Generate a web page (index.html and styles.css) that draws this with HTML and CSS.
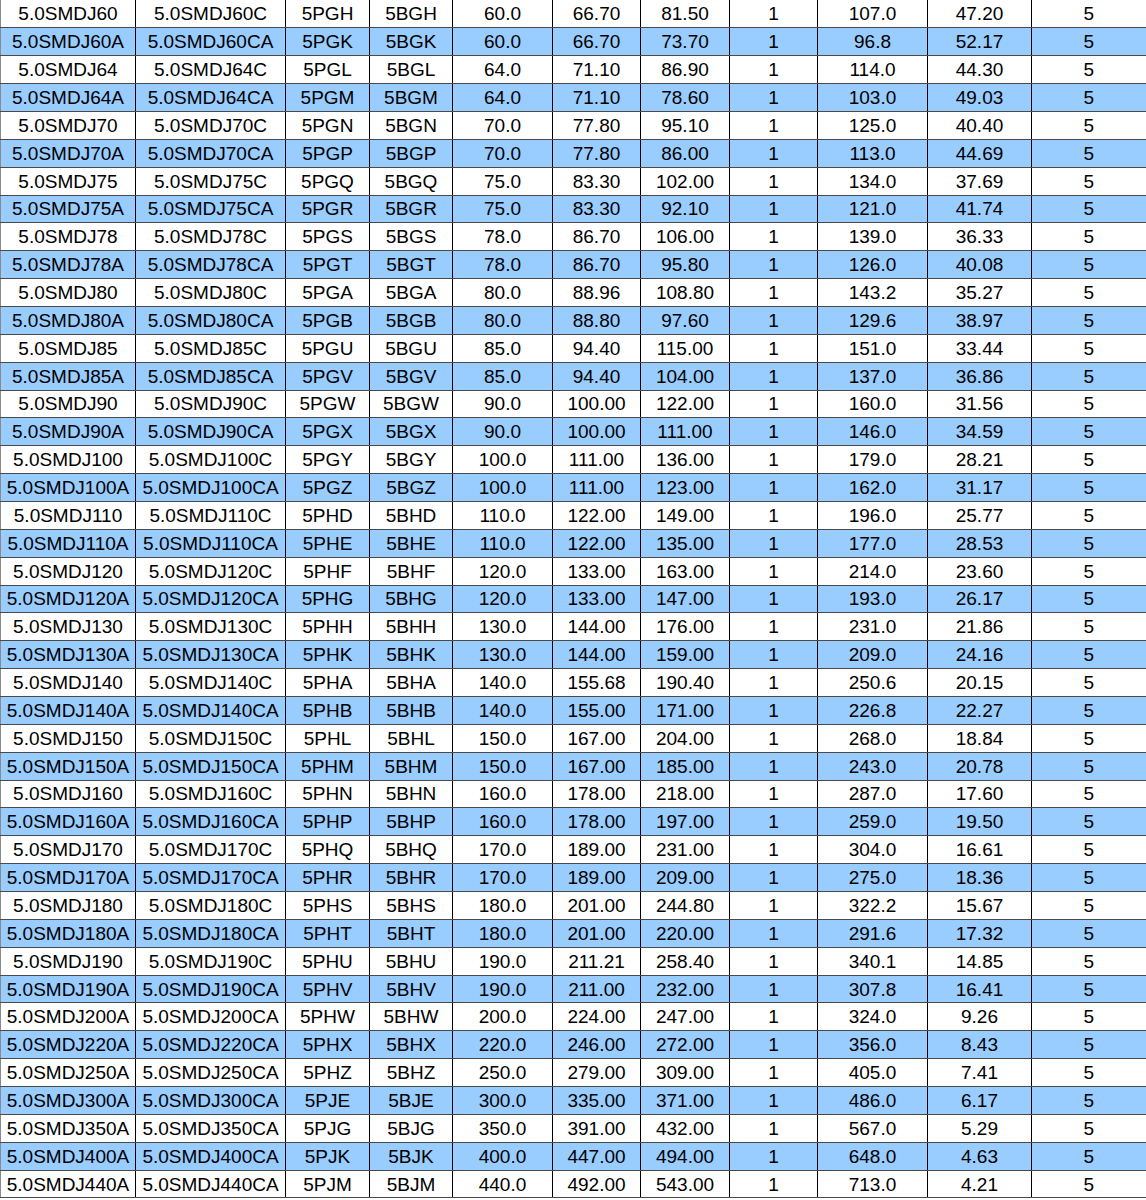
FILE: index.html
```html
<!DOCTYPE html>
<html>
<head>
<meta charset="utf-8">
<link rel="stylesheet" href="styles.css">
</head>
<body>
<table class="spec">
<colgroup>
<col class="c1"><col class="c2"><col class="c3"><col class="c4"><col class="c5"><col class="c6"><col class="c7"><col class="c8"><col class="c9"><col class="c10"><col class="c11">
</colgroup>
<tbody>
<tr><td>5.0SMDJ60</td><td>5.0SMDJ60C</td><td>5PGH</td><td>5BGH</td><td>60.0</td><td>66.70</td><td>81.50</td><td>1</td><td>107.0</td><td>47.20</td><td>5</td></tr>
<tr class="alt"><td>5.0SMDJ60A</td><td>5.0SMDJ60CA</td><td>5PGK</td><td>5BGK</td><td>60.0</td><td>66.70</td><td>73.70</td><td>1</td><td>96.8</td><td>52.17</td><td>5</td></tr>
<tr><td>5.0SMDJ64</td><td>5.0SMDJ64C</td><td>5PGL</td><td>5BGL</td><td>64.0</td><td>71.10</td><td>86.90</td><td>1</td><td>114.0</td><td>44.30</td><td>5</td></tr>
<tr class="alt"><td>5.0SMDJ64A</td><td>5.0SMDJ64CA</td><td>5PGM</td><td>5BGM</td><td>64.0</td><td>71.10</td><td>78.60</td><td>1</td><td>103.0</td><td>49.03</td><td>5</td></tr>
<tr><td>5.0SMDJ70</td><td>5.0SMDJ70C</td><td>5PGN</td><td>5BGN</td><td>70.0</td><td>77.80</td><td>95.10</td><td>1</td><td>125.0</td><td>40.40</td><td>5</td></tr>
<tr class="alt"><td>5.0SMDJ70A</td><td>5.0SMDJ70CA</td><td>5PGP</td><td>5BGP</td><td>70.0</td><td>77.80</td><td>86.00</td><td>1</td><td>113.0</td><td>44.69</td><td>5</td></tr>
<tr><td>5.0SMDJ75</td><td>5.0SMDJ75C</td><td>5PGQ</td><td>5BGQ</td><td>75.0</td><td>83.30</td><td>102.00</td><td>1</td><td>134.0</td><td>37.69</td><td>5</td></tr>
<tr class="alt"><td>5.0SMDJ75A</td><td>5.0SMDJ75CA</td><td>5PGR</td><td>5BGR</td><td>75.0</td><td>83.30</td><td>92.10</td><td>1</td><td>121.0</td><td>41.74</td><td>5</td></tr>
<tr><td>5.0SMDJ78</td><td>5.0SMDJ78C</td><td>5PGS</td><td>5BGS</td><td>78.0</td><td>86.70</td><td>106.00</td><td>1</td><td>139.0</td><td>36.33</td><td>5</td></tr>
<tr class="alt"><td>5.0SMDJ78A</td><td>5.0SMDJ78CA</td><td>5PGT</td><td>5BGT</td><td>78.0</td><td>86.70</td><td>95.80</td><td>1</td><td>126.0</td><td>40.08</td><td>5</td></tr>
<tr><td>5.0SMDJ80</td><td>5.0SMDJ80C</td><td>5PGA</td><td>5BGA</td><td>80.0</td><td>88.96</td><td>108.80</td><td>1</td><td>143.2</td><td>35.27</td><td>5</td></tr>
<tr class="alt"><td>5.0SMDJ80A</td><td>5.0SMDJ80CA</td><td>5PGB</td><td>5BGB</td><td>80.0</td><td>88.80</td><td>97.60</td><td>1</td><td>129.6</td><td>38.97</td><td>5</td></tr>
<tr><td>5.0SMDJ85</td><td>5.0SMDJ85C</td><td>5PGU</td><td>5BGU</td><td>85.0</td><td>94.40</td><td>115.00</td><td>1</td><td>151.0</td><td>33.44</td><td>5</td></tr>
<tr class="alt"><td>5.0SMDJ85A</td><td>5.0SMDJ85CA</td><td>5PGV</td><td>5BGV</td><td>85.0</td><td>94.40</td><td>104.00</td><td>1</td><td>137.0</td><td>36.86</td><td>5</td></tr>
<tr><td>5.0SMDJ90</td><td>5.0SMDJ90C</td><td>5PGW</td><td>5BGW</td><td>90.0</td><td>100.00</td><td>122.00</td><td>1</td><td>160.0</td><td>31.56</td><td>5</td></tr>
<tr class="alt"><td>5.0SMDJ90A</td><td>5.0SMDJ90CA</td><td>5PGX</td><td>5BGX</td><td>90.0</td><td>100.00</td><td>111.00</td><td>1</td><td>146.0</td><td>34.59</td><td>5</td></tr>
<tr><td>5.0SMDJ100</td><td>5.0SMDJ100C</td><td>5PGY</td><td>5BGY</td><td>100.0</td><td>111.00</td><td>136.00</td><td>1</td><td>179.0</td><td>28.21</td><td>5</td></tr>
<tr class="alt"><td>5.0SMDJ100A</td><td>5.0SMDJ100CA</td><td>5PGZ</td><td>5BGZ</td><td>100.0</td><td>111.00</td><td>123.00</td><td>1</td><td>162.0</td><td>31.17</td><td>5</td></tr>
<tr><td>5.0SMDJ110</td><td>5.0SMDJ110C</td><td>5PHD</td><td>5BHD</td><td>110.0</td><td>122.00</td><td>149.00</td><td>1</td><td>196.0</td><td>25.77</td><td>5</td></tr>
<tr class="alt"><td>5.0SMDJ110A</td><td>5.0SMDJ110CA</td><td>5PHE</td><td>5BHE</td><td>110.0</td><td>122.00</td><td>135.00</td><td>1</td><td>177.0</td><td>28.53</td><td>5</td></tr>
<tr><td>5.0SMDJ120</td><td>5.0SMDJ120C</td><td>5PHF</td><td>5BHF</td><td>120.0</td><td>133.00</td><td>163.00</td><td>1</td><td>214.0</td><td>23.60</td><td>5</td></tr>
<tr class="alt"><td>5.0SMDJ120A</td><td>5.0SMDJ120CA</td><td>5PHG</td><td>5BHG</td><td>120.0</td><td>133.00</td><td>147.00</td><td>1</td><td>193.0</td><td>26.17</td><td>5</td></tr>
<tr><td>5.0SMDJ130</td><td>5.0SMDJ130C</td><td>5PHH</td><td>5BHH</td><td>130.0</td><td>144.00</td><td>176.00</td><td>1</td><td>231.0</td><td>21.86</td><td>5</td></tr>
<tr class="alt"><td>5.0SMDJ130A</td><td>5.0SMDJ130CA</td><td>5PHK</td><td>5BHK</td><td>130.0</td><td>144.00</td><td>159.00</td><td>1</td><td>209.0</td><td>24.16</td><td>5</td></tr>
<tr><td>5.0SMDJ140</td><td>5.0SMDJ140C</td><td>5PHA</td><td>5BHA</td><td>140.0</td><td>155.68</td><td>190.40</td><td>1</td><td>250.6</td><td>20.15</td><td>5</td></tr>
<tr class="alt"><td>5.0SMDJ140A</td><td>5.0SMDJ140CA</td><td>5PHB</td><td>5BHB</td><td>140.0</td><td>155.00</td><td>171.00</td><td>1</td><td>226.8</td><td>22.27</td><td>5</td></tr>
<tr><td>5.0SMDJ150</td><td>5.0SMDJ150C</td><td>5PHL</td><td>5BHL</td><td>150.0</td><td>167.00</td><td>204.00</td><td>1</td><td>268.0</td><td>18.84</td><td>5</td></tr>
<tr class="alt"><td>5.0SMDJ150A</td><td>5.0SMDJ150CA</td><td>5PHM</td><td>5BHM</td><td>150.0</td><td>167.00</td><td>185.00</td><td>1</td><td>243.0</td><td>20.78</td><td>5</td></tr>
<tr><td>5.0SMDJ160</td><td>5.0SMDJ160C</td><td>5PHN</td><td>5BHN</td><td>160.0</td><td>178.00</td><td>218.00</td><td>1</td><td>287.0</td><td>17.60</td><td>5</td></tr>
<tr class="alt"><td>5.0SMDJ160A</td><td>5.0SMDJ160CA</td><td>5PHP</td><td>5BHP</td><td>160.0</td><td>178.00</td><td>197.00</td><td>1</td><td>259.0</td><td>19.50</td><td>5</td></tr>
<tr><td>5.0SMDJ170</td><td>5.0SMDJ170C</td><td>5PHQ</td><td>5BHQ</td><td>170.0</td><td>189.00</td><td>231.00</td><td>1</td><td>304.0</td><td>16.61</td><td>5</td></tr>
<tr class="alt"><td>5.0SMDJ170A</td><td>5.0SMDJ170CA</td><td>5PHR</td><td>5BHR</td><td>170.0</td><td>189.00</td><td>209.00</td><td>1</td><td>275.0</td><td>18.36</td><td>5</td></tr>
<tr><td>5.0SMDJ180</td><td>5.0SMDJ180C</td><td>5PHS</td><td>5BHS</td><td>180.0</td><td>201.00</td><td>244.80</td><td>1</td><td>322.2</td><td>15.67</td><td>5</td></tr>
<tr class="alt"><td>5.0SMDJ180A</td><td>5.0SMDJ180CA</td><td>5PHT</td><td>5BHT</td><td>180.0</td><td>201.00</td><td>220.00</td><td>1</td><td>291.6</td><td>17.32</td><td>5</td></tr>
<tr><td>5.0SMDJ190</td><td>5.0SMDJ190C</td><td>5PHU</td><td>5BHU</td><td>190.0</td><td>211.21</td><td>258.40</td><td>1</td><td>340.1</td><td>14.85</td><td>5</td></tr>
<tr class="alt"><td>5.0SMDJ190A</td><td>5.0SMDJ190CA</td><td>5PHV</td><td>5BHV</td><td>190.0</td><td>211.00</td><td>232.00</td><td>1</td><td>307.8</td><td>16.41</td><td>5</td></tr>
<tr><td>5.0SMDJ200A</td><td>5.0SMDJ200CA</td><td>5PHW</td><td>5BHW</td><td>200.0</td><td>224.00</td><td>247.00</td><td>1</td><td>324.0</td><td>9.26</td><td>5</td></tr>
<tr class="alt"><td>5.0SMDJ220A</td><td>5.0SMDJ220CA</td><td>5PHX</td><td>5BHX</td><td>220.0</td><td>246.00</td><td>272.00</td><td>1</td><td>356.0</td><td>8.43</td><td>5</td></tr>
<tr><td>5.0SMDJ250A</td><td>5.0SMDJ250CA</td><td>5PHZ</td><td>5BHZ</td><td>250.0</td><td>279.00</td><td>309.00</td><td>1</td><td>405.0</td><td>7.41</td><td>5</td></tr>
<tr class="alt"><td>5.0SMDJ300A</td><td>5.0SMDJ300CA</td><td>5PJE</td><td>5BJE</td><td>300.0</td><td>335.00</td><td>371.00</td><td>1</td><td>486.0</td><td>6.17</td><td>5</td></tr>
<tr><td>5.0SMDJ350A</td><td>5.0SMDJ350CA</td><td>5PJG</td><td>5BJG</td><td>350.0</td><td>391.00</td><td>432.00</td><td>1</td><td>567.0</td><td>5.29</td><td>5</td></tr>
<tr class="alt"><td>5.0SMDJ400A</td><td>5.0SMDJ400CA</td><td>5PJK</td><td>5BJK</td><td>400.0</td><td>447.00</td><td>494.00</td><td>1</td><td>648.0</td><td>4.63</td><td>5</td></tr>
<tr><td>5.0SMDJ440A</td><td>5.0SMDJ440CA</td><td>5PJM</td><td>5BJM</td><td>440.0</td><td>492.00</td><td>543.00</td><td>1</td><td>713.0</td><td>4.21</td><td>5</td></tr>
</tbody>
</table>
</body>
</html>
```

FILE: styles.css
```css
html, body {
  margin: 0;
  padding: 0;
  background: #ffffff;
}

.spec {
  border-collapse: collapse;
  table-layout: fixed;
  width: 1146px;
  font-family: "Liberation Sans", Arial, sans-serif;
  font-size: 19px;
  color: #000;
}

.spec .c1 { width: 135px; }
.spec .c2 { width: 150px; }
.spec .c3 { width: 84px; }
.spec .c4 { width: 83px; }
.spec .c5 { width: 100px; }
.spec .c6 { width: 88px; }
.spec .c7 { width: 89px; }
.spec .c8 { width: 88px; }
.spec .c9 { width: 110px; }
.spec .c10 { width: 104px; }
.spec .c11 { width: 115px; }

.spec tr {
  height: 27.86px;
}

.spec td {
  padding: 0;
  text-align: center;
  vertical-align: middle;
  white-space: nowrap;
  overflow: hidden;
  line-height: 21px;
  border-left: 1px solid #000;
  border-right: 1px solid #000;
  border-bottom: 1px solid #4a4a4a;
}

.spec td:first-child {
  border-left: 1px solid #8a8a8a;
}

.spec td:last-child {
  border-right: 2px solid #000;
}

.spec tr.alt td {
  background: #99ccff;
}
```
